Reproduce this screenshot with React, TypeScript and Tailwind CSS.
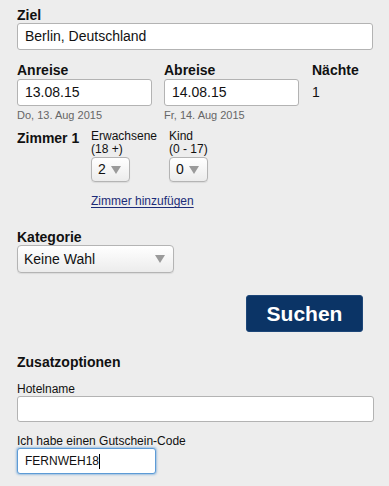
import React from "react";

function Arrow() {
  return (
    <svg width="10" height="8" viewBox="0 0 10 8" className="shrink-0">
      <polygon points="0,0 10,0 5,8" fill="#9a9a9a" />
    </svg>
  );
}

function Select({ value, w, h }: { value: string; w: string; h: string }) {
  return (
    <div
      className={`flex items-center justify-between ${w} ${h} rounded-[4px] border border-[#b4b4b4] bg-gradient-to-b from-[#ffffff] to-[#ececec] pl-[6px] pr-[8px] text-[14px] text-[#111] shadow-[0_1px_1px_rgba(0,0,0,0.08)]`}
    >
      <span>{value}</span>
      <Arrow />
    </div>
  );
}

export default function App() {
  return (
    <div
      className="w-[389px] h-[486px] overflow-hidden bg-[#ededed] pl-[17px] pt-[7px] text-[#111]"
      style={{ fontFamily: '"Liberation Sans", Arial, sans-serif' }}
    >
      <div className="text-[14px] font-bold leading-[16px]">Ziel</div>
      <div className="flex items-center w-[356px] h-[27px] rounded-[3px] border border-[#b3b3b3] bg-white px-[7px] text-[14px]">
        Berlin, Deutschland
      </div>

      <div className="mt-[12px] flex">
        <div className="flex flex-col w-[135px]">
          <div className="text-[14px] font-bold leading-[16px] mb-[1px]">Anreise</div>
          <div className="flex items-center h-[27px] rounded-[3px] border border-[#b3b3b3] bg-white px-[7px] text-[14px]">
            13.08.15
          </div>
          <div className="mt-[3px] text-[11px] leading-[13px] text-[#666]">Do, 13. Aug 2015</div>
        </div>
        <div className="flex flex-col w-[135px] ml-[12px]">
          <div className="text-[14px] font-bold leading-[16px] mb-[1px]">Abreise</div>
          <div className="flex items-center h-[27px] rounded-[3px] border border-[#b3b3b3] bg-white px-[7px] text-[14px]">
            14.08.15
          </div>
          <div className="mt-[3px] text-[11px] leading-[13px] text-[#666]">Fr, 14. Aug 2015</div>
        </div>
        <div className="flex flex-col ml-[13px]">
          <div className="text-[14px] font-bold leading-[16px] mb-[1px]">Nächte</div>
          <div className="flex items-center h-[27px] text-[14px]">1</div>
        </div>
      </div>

      <div className="mt-[8px] flex">
        <div className="w-[74px] text-[14px] font-bold leading-[16px]">Zimmer 1</div>
        <div className="flex flex-col">
          <div className="flex">
            <div className="flex flex-col w-[78px]">
              <div className="text-[12px] leading-[13px]">Erwachsene</div>
              <div className="text-[12px] leading-[13px]">(18 +)</div>
              <div className="mt-[1px]">
                <Select value="2" w="w-[39px]" h="h-[25px]" />
              </div>
            </div>
            <div className="flex flex-col">
              <div className="text-[12px] leading-[13px]">Kind</div>
              <div className="text-[12px] leading-[13px]">(0 - 17)</div>
              <div className="mt-[1px]">
                <Select value="0" w="w-[39px]" h="h-[25px]" />
              </div>
            </div>
          </div>
          <a className="mt-[13px] text-[12px] leading-[13px] text-[#1c2c78] underline underline-offset-[2px]">
            Zimmer hinzufügen
          </a>
        </div>
      </div>

      <div className="mt-[21px] text-[14px] font-bold leading-[16px]">Kategorie</div>
      <Select value="Keine Wahl" w="w-[157px]" h="h-[28px]" />

      <div className="mt-[22px] ml-[229px] flex items-center justify-center w-[117px] h-[37px] rounded-[3px] border border-[#1d4678] bg-[#0b3466] text-[21px] font-bold text-white">
        Suchen
      </div>

      <div className="mt-[22px] text-[14px] font-bold leading-[16px]">Zusatzoptionen</div>
      <div className="mt-[12px] text-[12px] leading-[14px]">Hotelname</div>
      <div className="w-[357px] h-[26px] rounded-[3px] border border-[#b3b3b3] bg-white" />
      <div className="mt-[12px] text-[12px] leading-[14px]">Ich habe einen Gutschein-Code</div>
      <div className="flex items-center w-[139px] h-[26px] rounded-[3px] border border-[#5d9bd6] bg-white px-[7px] text-[12px] shadow-[0_0_2px_1px_rgba(93,155,214,0.55)]">
        <span>FERNWEH18</span>
        <span className="inline-block w-[1px] h-[15px] bg-black" />
      </div>
    </div>
  );
}
